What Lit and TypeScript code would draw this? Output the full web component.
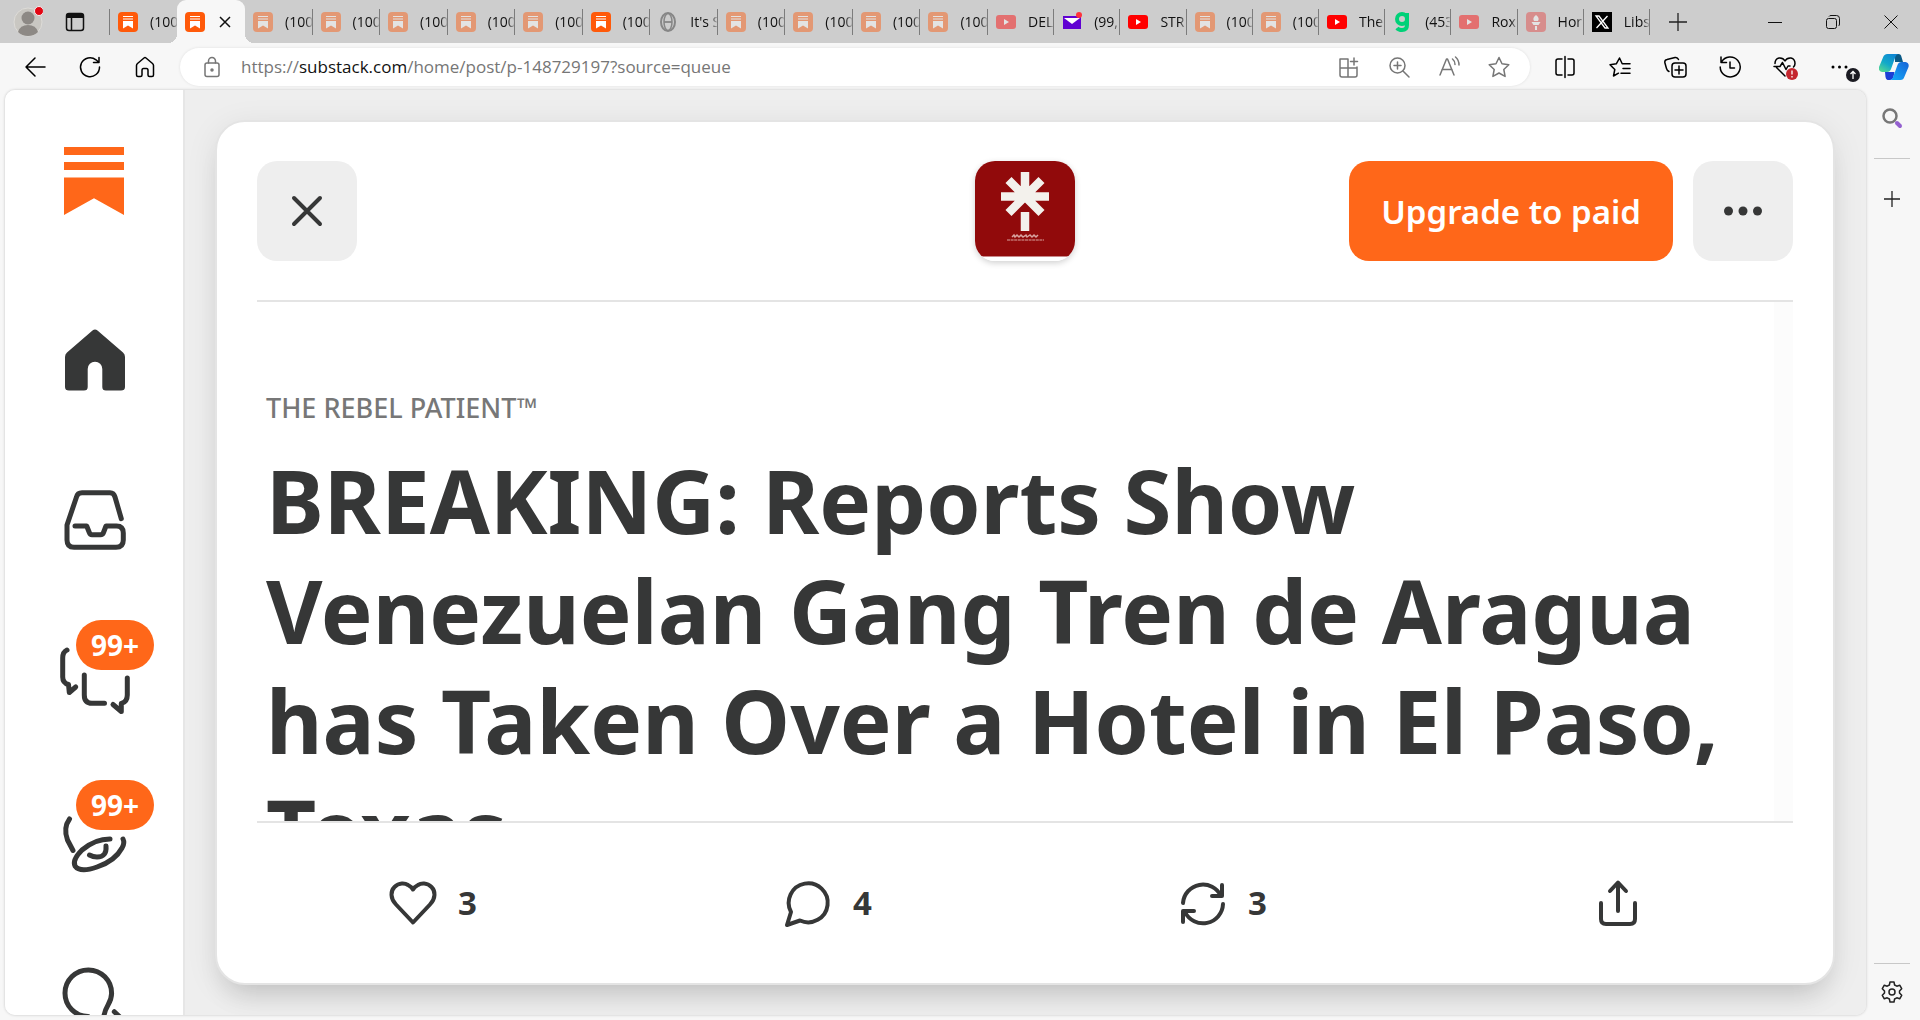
import { LitElement, html, css, svg, nothing } from "lit";
import { customElement, property } from "lit/decorators.js";
import { classMap } from "lit/directives/class-map.js";

type Kind = "sub" | "globe" | "yt" | "mail" | "gab" | "torch" | "x";
interface Tab {
  kind: Kind;
  title: string;
  dim?: boolean;
}

const sub = (dim = false): Tab => ({ kind: "sub", title: "(100", dim });

const PINNED_TABS: Tab[] = [
  sub(true), sub(true), sub(true), sub(true), sub(true), sub(),
  { kind: "globe", title: "It's S" },
  sub(true), sub(true), sub(true), sub(true),
];

const OTHER_TABS: Tab[] = [
  { kind: "yt", title: "DEL", dim: true },
  { kind: "mail", title: "(99," },
  { kind: "yt", title: "STR" },
  sub(true), sub(true),
  { kind: "yt", title: "The" },
  { kind: "gab", title: "(453" },
  { kind: "yt", title: "Rox", dim: true },
  { kind: "torch", title: "Hor", dim: true },
  { kind: "x", title: "Libs" },
];

const FAVICONS: Record<Kind, unknown> = {
  sub: svg`<rect width="20" height="20" rx="4" fill="#ff5a0a"/>
    <path d="M5 4.500h10M5 7h10" stroke="#fff" stroke-width="1.2"/><path d="M5 9h10v7.5l-5-3-5 3z" fill="#fff"/>`,
  globe: svg`<g fill="none" stroke="#868686"><ellipse cx="10" cy="10" rx="7" ry="9" stroke-width="2"/>
    <ellipse cx="10" cy="10" rx="4" ry="8.500" stroke-width="1.500"/><path d="M6 10h8" stroke-width="1.800"/></g>`,
  yt: svg`<rect y="3" width="20" height="14" rx="3" fill="#f00"/><path d="M8 7l5 3-5 3z" fill="#fff"/>`,
  mail: svg`<path d="M1 4h18v13H1z" fill="#6001d2"/><path d="M2 6l8 6 8-6" fill="#fff"/><circle cx="17" cy="3" r="3" fill="#ff333a"/>`,
  gab: svg`<g fill="none" stroke="#00d178" stroke-width="4"><circle cx="9" cy="7" r="5"/><path d="M14 1v12q0 5-5 5-3.500 0-5-2"/></g>`,
  torch: svg`<rect width="20" height="20" rx="4" fill="#e5413f"/><path d="M10 3q4 3 2 6H8q-2-3 2-6zM5.500 10h9l-2 3h-5zM9 14h2v4H9z" fill="#fff"/>`,
  x: svg`<rect width="20" height="20" fill="#000"/><path d="M4 4h3l9 12h-3zM15.500 4L4.500 16" fill="none" stroke="#fff" stroke-width="1.300"/>`,
};

const TOOL = {
  back: svg`<path d="M22 12H3M12 3l-9 9 9 9"/>`,
  reload: svg`<path d="M21.500 12a9.500 9.500 0 1 1-3.500-7.200L21 7.500M21 2.500v5h-5.500"/>`,
  home: svg`<path d="M3.500 10.500q0-1 1-2L11 3q1-.8 2 0l6.500 5.500q1 1 1 2V20q0 1.500-1.500 1.500h-2.500Q15 21.500 15 20v-4.500q0-2-1.500-2h-3q-1.500 0-1.500 2V20q0 1.500-1.500 1.500H5Q3.500 21.500 3.500 20z"/>`,
  lock: svg`<rect x="5" y="8" width="14" height="13.500" rx="2"/><path d="M8.500 8V6a3.500 3.500 0 0 1 7 0v2"/><circle cx="12" cy="15" r="1" fill="currentColor"/>`,
  apps: svg`<path d="M3 4h8v18H5q-2 0-2-2zM3 13h17v7q0 2-2 2h-7M20 13v-1M17 3v7M13.500 6.500h7"/>`,
  zoom: svg`<circle cx="10.500" cy="10.500" r="7.500"/><path d="M16 16l6 6M10.500 7v7M7 10.500h7"/>`,
  read: svg`<path d="M3 20L9.500 4h1L17 20M5 14.500h10M15.500 4q2.500 2 2.500 5.500M18.500 2q3.500 3 3.500 8"/>`,
  star: svg`<path d="M12 2.500l3 6.300 6.800.900-5 4.800 1.300 6.900L12 18l-6.100 3.400 1.300-6.900-5-4.800 6.800-.900z"/>`,
  split: svg`<path d="M9 4H5Q3 4 3 6v12q0 2 2 2h4M15 4h4q2 0 2 2v12q0 2-2 2h-4M12 1.500v21"/>`,
  favs: svg`<path d="M10.500 18.200L5.500 21l1.300-6.500L2 9.700l6.300-.9L11.500 3l2.700 5.800H22M15 13.500h7M13 18.200h9"/>`,
  collect: svg`<rect x="9" y="8" width="14" height="14" rx="3"/><path d="M16 11v8M12 15h8M6 16.500q-2-1-2.500-3L1.800 7.500Q1.500 5 4 4.500l8-2Q14.500 2 15.500 4.500"/>`,
  history: svg`<path d="M3.500 7a10 10 0 1 1-1.300 5M3 2v5.500h5.500M12 7v6h4.500"/>`,
  health: svg`<path d="M12 21L3.500 12.500M2 8.500Q2 4 6 3q4-.500 6 3 2-3.500 6-3 4 1 4 5.500 0 2-1.500 3.500M1 11.500h6l2.500-4 3.500 7 2-3.500h2"/>`,
};

const SHARED = css`
  * { box-sizing: border-box; }
  button { font: inherit; color: inherit; background: none; border: 0; padding: 0; cursor: pointer; }
  svg { display: block; flex: none; }
`;

@customElement("browser-tab")
class BrowserTab extends LitElement {
  @property({ attribute: false }) tab!: Tab;

  static styles = [SHARED, css`
    :host { display: block; min-width: 0; }
    .tab { display: flex; align-items: center; gap: 12px; width: 100%; height: 26px; padding-left: 8px;
      border-right: 1px solid #7c7c7c; overflow: hidden; text-align: left; }
    .dim { opacity: 0.45; }
    .title { flex: 1; min-width: 0; overflow: hidden; white-space: nowrap; font-size: 14px; line-height: 20px; color: #111;
      mask-image: linear-gradient(90deg, #000 75%, transparent 105%); }
  `];

  render() {
    return html`<button class="tab">
      <svg class=${classMap({ dim: !!this.tab.dim })} width="20" height="20" viewBox="0 0 20 20">${FAVICONS[this.tab.kind]}</svg>
      <span class="title">${this.tab.title}</span>
    </button>`;
  }
}

@customElement("browser-chrome")
class BrowserChrome extends LitElement {
  static styles = [SHARED, css`
    :host { display: block; }
    .strip { display: flex; align-items: center; height: 43px; background: #cdcdcd; font-family: "Open Sans", "Noto Sans", sans-serif; }
    .profile { display: grid; place-items: center; width: 56px; height: 43px; }
    .space { display: grid; place-items: center; width: 38px; height: 43px; margin-right: 15px; }
    .first { flex: 0 1 68px; min-width: 0; border-left: 1px solid #7c7c7c; }
    .first browser-tab { margin-right: -1px; }
    .active { position: relative; display: flex; align-items: center; justify-content: space-between; flex: 0 1 68px; height: 43px; padding: 0 14px 0 8px;
      background: #f7f7f7; border-radius: 9px 9px 0 0; z-index: 1; }
    .active::before, .active::after { content: ""; position: absolute; bottom: 0; width: 9px; height: 9px; }
    .active::before { right: 100%; background: radial-gradient(circle at 0 0, #cdcdcd 9px, #f7f7f7 9px); }
    .active::after { left: 100%; background: radial-gradient(circle at 100% 0, #cdcdcd 9px, #f7f7f7 9px); }
    .group { display: grid; grid-auto-flow: column; grid-auto-columns: minmax(0, 1fr); min-width: 0; }
    .pinned { flex: 0 1 743px; }
    .others { flex: 0 1 662px; }
    .new { display: grid; place-items: center; width: 56px; height: 43px; }
    .window { display: flex; margin-left: auto; }
    .window button { display: grid; place-items: center; width: 58px; height: 43px; }
    .bar { display: flex; align-items: center; height: 47px; padding-left: 7px; background: #f7f7f7; }
    .tool { display: grid; place-items: center; width: 55px; height: 38px; position: relative; }
    .copilot { width: 53px; }
    .tool .mark { position: absolute; left: 29px; top: 20px; }
    .tool .up { left: 34px; }
    .address { display: flex; align-items: center; flex: 1; height: 38px; margin: 0 7px 0 8px; padding: 0 6px 0 20px; border-radius: 19px;
      background: #fff; box-shadow: 0 0 3px #0000001a; color: #767676; }
    .url { flex: 1; margin-left: 17px; font-family: "Open Sans", "Noto Sans", sans-serif; font-size: 17px; line-height: 24px; }
    .url b { font-weight: 400; color: #111; }
    .in { display: grid; place-items: center; width: 50px; height: 38px; }
  `];

  private icon(shape: unknown) {
    return html`<svg width="24" height="24" viewBox="0 0 24 24" fill="none" stroke="currentColor" stroke-width="1.500"
      stroke-linejoin="round" stroke-linecap="round">${shape}</svg>`;
  }

  private tool(label: string, shape: unknown, mark: unknown = nothing) {
    return html`<button class="tool" aria-label=${label}>${this.icon(shape)}${mark}</button>`;
  }

  render() {
    return html`
      <div class="strip">
        <button class="profile" aria-label="Profile">
          <svg width="30" height="36" viewBox="0 0 30 36">
            <circle cx="15" cy="18" r="14" fill="#c9c7c2" stroke="#dedcd8"/>
            <circle cx="15" cy="14" r="6.500" fill="#8d8985"/><path d="M5 28q2-7 10-7t10 7q-4 4-10 4T5 28z" fill="#8d8985"/>
            <circle cx="26" cy="7" r="4.500" fill="#e30613" stroke="#f2f2f2"/>
          </svg>
        </button>
        <button class="space" aria-label="Workspaces">
          <svg width="20" height="20" viewBox="0 0 20 20" fill="none" stroke="#111" stroke-width="1.500">
            <rect x="1.500" y="1.500" width="17" height="17" rx="2.500"/><path d="M2 4h16" stroke-width="4"/><path d="M6.500 5v13"/>
          </svg>
        </button>
        <div class="first"><browser-tab .tab=${sub()}></browser-tab></div>
        <div class="active">
          <svg width="20" height="20" viewBox="0 0 20 20">${FAVICONS.sub}</svg>
          <button aria-label="Close tab"><svg width="12" height="12" viewBox="0 0 12 12" stroke="#111" stroke-width="1.500"><path d="M1 1l10 10M11 1L1 11"/></svg></button>
        </div>
        <div class="group pinned">${PINNED_TABS.map((t) => html`<browser-tab .tab=${t}></browser-tab>`)}</div>
        <div class="group others">${OTHER_TABS.map((t) => html`<browser-tab .tab=${t}></browser-tab>`)}</div>
        <button class="new" aria-label="New tab"><svg width="18" height="18" viewBox="0 0 18 18" stroke="#222" stroke-width="1.300"><path d="M9 0v18M0 9h18"/></svg></button>
        <div class="window">
          <button aria-label="Minimize"><svg width="14" height="14" viewBox="0 0 14 14" stroke="#111"><path d="M0 7.500h14"/></svg></button>
          <button aria-label="Restore"><svg width="14" height="14" viewBox="0 0 14 14" fill="none" stroke="#111"><rect x="0.500" y="3.500" width="10" height="10" rx="2"/><path d="M3 1.500q.500-1 2-1h5.500q3 0 3 3V9q0 1.500-1 2"/></svg></button>
          <button aria-label="Close"><svg width="14" height="14" viewBox="0 0 14 14" stroke="#111"><path d="M.5.5l13 13M13.500.5l-13 13"/></svg></button>
        </div>
      </div>
      <div class="bar">
        ${this.tool("Back", TOOL.back)}${this.tool("Refresh", TOOL.reload)}${this.tool("Home", TOOL.home)}
        <div class="address">
          ${this.icon(TOOL.lock)}
          <span class="url">https://<b>substack.com</b>/home/post/p-148729197?source=queue</span>
          ${[["Apps", TOOL.apps], ["Zoom", TOOL.zoom], ["Read aloud", TOOL.read], ["Favorite", TOOL.star]].map(
            ([label, shape]) => html`<button class="in" aria-label=${label}>${this.icon(shape)}</button>`)}
        </div>
        ${this.tool("Split screen", TOOL.split)}${this.tool("Favorites", TOOL.favs)}${this.tool("Collections", TOOL.collect)}
        ${this.tool("History", TOOL.history)}
        ${this.tool("Browser essentials", TOOL.health, html`<svg class="mark" width="12" height="12" viewBox="0 0 12 12"><circle cx="6" cy="6" r="6" fill="#c4262e"/><path d="M6 2.500v4M6 8v1.500" stroke="#fff" stroke-width="1.300"/></svg>`)}
        ${this.tool("Settings", svg`<g fill="currentColor" stroke="none"><circle cx="5" cy="12" r="1.500"/><circle cx="11.500" cy="12" r="1.500"/><circle cx="18" cy="12" r="1.500"/></g>`,
          html`<svg class="mark up" width="14" height="14" viewBox="0 0 14 14"><circle cx="7" cy="7" r="7" fill="#1b1b22"/><path d="M7 11V3.500M4.500 6L7 3.500 9.500 6" fill="none" stroke="#fff" stroke-width="1.300"/></svg>`)}
        <button class="tool copilot" aria-label="Copilot">
          <svg width="30" height="28" viewBox="0 0 30 28">
            <defs>
              <linearGradient id="ca" x1="0" y1="1" x2="0.700" y2="0"><stop offset="0" stop-color="#5fe08a"/><stop offset="0.500" stop-color="#12a9c9"/><stop offset="1" stop-color="#0f86d4"/></linearGradient>
              <linearGradient id="cb" x1="0" y1="1" x2="1" y2="0"><stop offset="0" stop-color="#14aefb"/><stop offset="1" stop-color="#1763d6"/></linearGradient>
            </defs>
            <path d="M16 1h3.500q2.500 0 3 3l1.500 5h-8z" fill="#0b5a86"/>
            <path d="M8.500 27h3q2 0 3-3l1-5H6l.500 5Q7 27 8.500 27z" fill="#1c3fd6"/>
            <path d="M8.500 1H20q-3 0-4 4l-4 11q-1 3-4 3H3q-4-1-3-5L4 4.500Q5 1 8.500 1z" fill="url(#ca)"/>
            <path d="M21.500 27H10.500q3 0 4-4l4-11q1-3 4-3h4q4 1 3 5l-4 9.500q-1 3.500-4 3.500z" fill="url(#cb)"/>
            <path d="M16.500 9h4q-2.500.500-3.500 3l-3 7h-3.500q2-.500 3-3z" fill="#f7f7f7"/>
          </svg>
        </button>
      </div>`;
  }
}

@customElement("side-nav")
class SideNav extends LitElement {
  static styles = [SHARED, css`
    :host { display: block; flex: 0 0 180px; overflow: hidden; background: #fff; border-right: 2px solid #e6e6e6; }
    .logo { display: flex; justify-content: center; padding: 57px 0 65px; }
    .item { position: relative; display: grid; place-items: center; height: 160px; color: #363737; text-decoration: none; padding-left: 2px; }
    .badge { position: absolute; left: 71px; top: 20px; height: 50px; padding: 0 15px; border-radius: 25px; background: #ff6719; color: #fff;
      font-size: 28px; font-weight: 700; line-height: 50px; }
  `];

  private item(label: string, shape: unknown, badge = "", filled = false) {
    return html`<a class="item" href="#" aria-label=${label}>
      <svg width="80" height="80" viewBox="0 0 80 80" fill=${filled ? "currentColor" : "none"} stroke=${filled ? "none" : "currentColor"}
        stroke-width="5" stroke-linecap="round" stroke-linejoin="round">${shape}</svg>
      ${badge ? html`<span class="badge">${badge}</span>` : nothing}
    </a>`;
  }

  render() {
    return html`
      <div class="logo"><svg width="60" height="68" viewBox="0 0 60 68" fill="#ff6719"><path d="M0 0h60v8H0zM0 15h60v8H0zM0 30.500h60V68L30 51.300 0 68z"/></svg></div>
      ${this.item("Home", svg`<path d="M37.500 10.500Q40 8.500 42.500 10.500L68 32.500Q70 34 70 37V67Q70 70.500 66 70.500H51Q47.300 70.500 47.300 67V49A7.300 7.300 0 0 0 32.700 49V67Q32.700 70.500 29 70.500H14Q10 70.500 10 67V37Q10 34 12 32.500Z"/>`, "", true)}
      ${this.item("Inbox", svg`<path d="M66.300 38.700L60 17Q58.800 12.700 55 12.700H27Q22.500 12.700 21.500 17L12 45V60Q12 67.300 19 67.300H61Q68.300 67.300 68.300 60V53Q68.300 46 61.500 46H51L48.500 52.500Q47.700 54.700 45.500 54.700H37Q35 54.700 34.300 52.500L31.700 46H20"/>`)}
      ${this.item("Chat", svg`<path d="M12 10Q7.700 12 7.700 18V37Q7.700 43 13.500 44.500L14.300 52.500 20.700 47M29.300 35V55Q29.300 63.300 37 63.300H49.500M72.300 38V55Q72.300 62 66.300 63.500V71.500L58 64.500"/>`, "99+")}
      ${this.item("Activity", svg`<path d="M14.500 19Q8 28 12.500 40L18 50.500M55 39Q40 39 27 50 17 60 20 66 25 73 42 67 60 61 67 48 70 43 68 39M51 46Q52 57 42 57 38 57 34.500 55"/>`, "99+")}
      ${this.item("Search", svg`<path d="M33 56.500A23.300 23.300 0 1 1 56.600 33.300C56.600 45 49 45 48.500 60M59.300 51.700L68 60"/>`)}`;
  }
}

@customElement("post-reader")
class PostReader extends LitElement {
  static styles = [SHARED, css`
    :host { display: flex; flex: 1; min-width: 0; padding: 30px 31px 30px 30px; background: #eee; overflow: hidden; }
    .card { display: flex; flex-direction: column; flex: 1; min-width: 0; border: 2px solid #e4e4e4; border-radius: 30px; background: #fff;
      color: #363737; box-shadow: 0 20px 28px -12px #00000024, 0 6px 32px #00000014; }
    .head { display: grid; grid-template-columns: 1fr auto 1fr; align-items: center; margin: 0 40px; padding: 39px 0; border-bottom: 2px solid #e4e4e4; }
    .square { display: grid; place-items: center; width: 100px; height: 100px; border-radius: 20px; background: #eee; }
    .logo { border-radius: 20px; overflow: hidden; box-shadow: 0 2px 6px #00000030; }
    .actions { display: flex; justify-content: flex-end; gap: 20px; }
    .upgrade { height: 100px; padding: 0 32px; border-radius: 20px; background: #ff6719; color: #fff; font-size: 33px; font-weight: 600; }
    .body { display: flex; flex: 1; min-height: 0; margin: 0 40px; overflow: hidden; }
    .article { flex: 1; min-width: 0; padding: 86px 20px 0 9px; }
    .track { flex: 0 0 19px; background: #fcfcfc; }
    .brand { margin: 0; font-size: 27px; line-height: 40px; font-weight: 500; color: #777; }
    h1 { margin: 17px 0 0; font-size: 87px; line-height: 110px; font-weight: 700; }
    .rule { margin: 0 40px; border-top: 2px solid #e4e4e4; }
    .foot { display: grid; grid-template-columns: repeat(4, 1fr); padding: 0 18px; }
    .foot button { display: flex; align-items: center; justify-content: center; gap: 20px; height: 160px; font-size: 33px; line-height: 40px; font-weight: 700; }
  `];

  private icon(shape: unknown) {
    return html`<svg width="50" height="50" viewBox="0 0 50 50" fill="none" stroke="currentColor" stroke-width="4" stroke-linecap="round" stroke-linejoin="round">${shape}</svg>`;
  }

  render() {
    return html`<article class="card">
      <header class="head">
        <button class="square" aria-label="Close"><svg width="32" height="32" viewBox="0 0 32 32" stroke="currentColor" stroke-width="4" stroke-linecap="round"><path d="M3 3l26 26M29 3L3 29"/></svg></button>
        <svg class="logo" width="100" height="100" viewBox="0 0 100 100" role="img" aria-label="The Rebel Patient">
          <rect width="100" height="100" fill="#fff"/><rect width="100" height="95" fill="#910a0b"/><path d="M0 95.500h100" stroke="#c9888a"/>
          <g stroke="#f3f1ec" stroke-width="8.500" fill="none"><path d="M50 11v24M26 35.500h48M33.500 19L50 35.500 66.500 19M33.500 52L50 35.500 66.500 52M50 51v19"/></g>
          <g stroke="#d9a3a0" fill="none"><path d="M37 76l2-2 1 2 2-2 2 2 2-2 2 2 3-2 1 2 3-2 2 2 2-2 2 2 2-2" stroke-width="1.500"/><path d="M32 79h37" stroke-dasharray="3 .6"/></g>
        </svg>
        <div class="actions">
          <button class="upgrade">Upgrade to paid</button>
          <button class="square" aria-label="More"><svg width="40" height="10" viewBox="0 0 40 10" fill="currentColor"><circle cx="5.500" cy="5" r="4.500"/><circle cx="20" cy="5" r="4.500"/><circle cx="34.500" cy="5" r="4.500"/></svg></button>
        </div>
      </header>
      <div class="body">
        <div class="article">
          <p class="brand">THE REBEL PATIENT™</p>
          <h1>BREAKING: Reports Show Venezuelan Gang Tren de Aragua has Taken Over a Hotel in El Paso, Texas</h1>
        </div>
        <div class="track"></div>
      </div>
      <div class="rule"></div>
      <footer class="foot">
        <button aria-label="Like">${this.icon(svg`<path d="M25 44.500L8 26.500C2 20 2.500 13 6.500 9 11 4.500 17 5 20 7 23 8.500 24 9.500 25 11.500 26 9.500 27 8.500 30 7 33 5 39 4.500 43.500 9 47.500 13 48 20 42 26.500Z"/>`)}<span>3</span></button>
        <button aria-label="Comment">${this.icon(svg`<path d="M4 47L8 34A19.500 19.500 0 1 1 17 42.500z"/>`)}<span>4</span></button>
        <button aria-label="Restack">${this.icon(svg`<path d="M5 25A20 20 0 0 1 43 18M44 7V18H34M45 26A20 20 0 0 1 7 34M5 44V33H16"/>`)}<span>3</span></button>
        <button aria-label="Share">${this.icon(svg`<path d="M25 33V5M17 13L25 4.500 33 13M8 25V41Q8 46 13 46H37Q42 46 42 41V25"/>`)}</button>
      </footer>
    </article>`;
  }
}

@customElement("edge-rail")
class EdgeRail extends LitElement {
  static styles = [SHARED, css`
    :host { display: flex; flex-direction: column; align-items: center; flex: 0 0 54px; padding-right: 2px; box-sizing: border-box; color: #222; }
    button { display: grid; place-items: center; width: 36px; height: 56px; }
    .line { width: 36px; height: 1px; background: #c8c8c8; }
    .add { height: 80px; }
    .gap { flex: 1; }
    .top { padding-bottom: 12px; }
  `];

  render() {
    return html`
      <div class="top"><button aria-label="Search"><svg width="22" height="22" viewBox="0 0 22 22" fill="none" stroke-linecap="round"><circle cx="9" cy="9" r="6.500" stroke="#777" stroke-width="2.500"/><path d="M16 16l3 3" stroke="#9460cf" stroke-width="4"/></svg></button></div>
      <div class="line"></div>
      <button class="add" aria-label="Add"><svg width="16" height="16" viewBox="0 0 16 16" stroke="currentColor" stroke-width="1.300"><path d="M8 0v16M0 8h16"/></svg></button>
      <div class="gap"></div>
      <div class="line"></div>
      <button aria-label="Settings"><svg width="22" height="22" viewBox="0 0 22 22" fill="none" stroke="currentColor" stroke-width="1.500" stroke-linejoin="round">
        <path d="M9 1h4l.600 3 2.200 1.200 2.900-1 2 3.500L18.500 10v2l2.200 2.300-2 3.500-2.900-1L13.600 18 13 21H9l-.600-3-2.200-1.200-2.900 1-2-3.500L3.500 12v-2L1.300 7.700l2-3.500 2.900 1L8.400 4z"/><circle cx="11" cy="11" r="3"/></svg></button>`;
  }
}

@customElement("app-root")
class AppRoot extends LitElement {
  static styles = [SHARED, css`
    :host { display: flex; flex-direction: column; height: 100vh; background: #f7f7f7; font-family: "Noto Sans", "Open Sans", sans-serif; }
    .main { display: flex; flex: 1; min-height: 0; }
    .view { display: flex; flex: 1; min-width: 0; margin: 0 0 5px 5px; border-radius: 10px; overflow: hidden; box-shadow: 0 0 3px #00000038; }
  `];

  render() {
    return html`
      <browser-chrome></browser-chrome>
      <div class="main">
        <div class="view"><side-nav></side-nav><post-reader></post-reader></div>
        <edge-rail></edge-rail>
      </div>`;
  }
}
